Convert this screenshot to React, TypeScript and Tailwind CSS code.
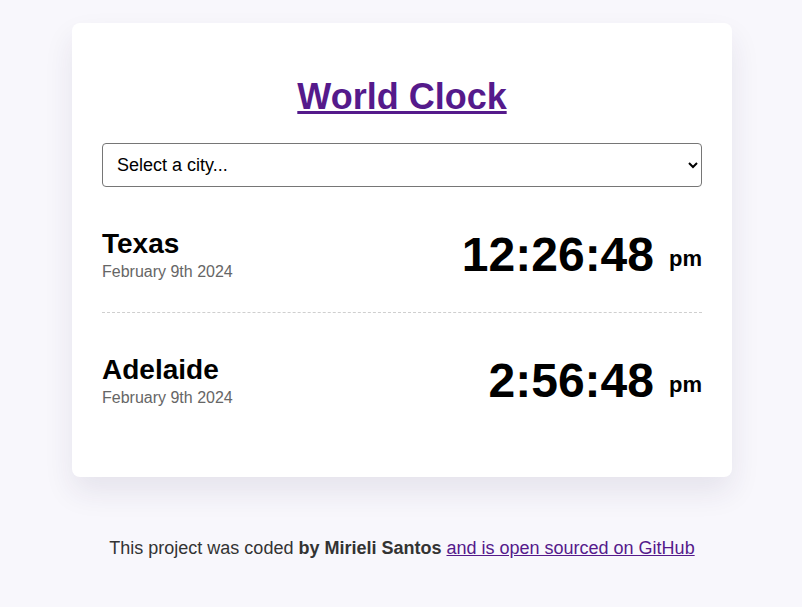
import React, { useState } from 'react';

type City = {
  name: string;
  date: string;
  time: string;
  period: string;
};

const cities: City[] = [
  { name: 'Texas', date: 'February 9th 2024', time: '12:26:48', period: 'pm' },
  { name: 'Adelaide', date: 'February 9th 2024', time: '2:56:48', period: 'pm' },
];

const CityRow: React.FC<{ city: City; last?: boolean }> = ({ city, last }) => (
  <div
    className={`flex items-center justify-between pt-[40px] pb-[30px] ${
      last ? '' : 'border-b border-dashed border-[#cfcfcf]'
    }`}
  >
    <div>
      <h2 className="text-[28px] font-bold leading-[30px] text-black">{city.name}</h2>
      <div className="mt-[4px] text-[16px] leading-[18px] text-[#666]">{city.date}</div>
    </div>
    <div className="flex items-center">
      <span className="text-[48px] font-bold leading-[55px] text-black">{city.time}</span>
      <span className="mt-[8px] ml-[15px] text-[22px] font-bold leading-[25px] text-black">{city.period}</span>
    </div>
  </div>
);

export default function App() {
  const [city, setCity] = useState('');

  return (
    <div className="min-h-[607px] bg-[#f8f7fc] pt-[23px] pl-[2px] font-['Liberation_Sans',Arial,sans-serif]">
      <div className="mx-auto w-[660px] rounded-[8px] bg-white px-[30px] pt-[53px] pb-[39px] shadow-[0_15px_30px_rgba(40,30,80,0.09)]">
        <h1 className="text-center text-[36px] font-bold leading-[41px]">
          <a href="#" className="text-[#551a8b] underline">
            World Clock
          </a>
        </h1>

        <select
          value={city}
          onChange={(e) => setCity(e.target.value)}
          className="mt-[26px] block h-[44px] w-full rounded-[4px] border border-[#767676] bg-white px-[10px] text-[18px] text-black"
        >
          <option value="">Select a city...</option>
          <option value="current">My current location</option>
          <option value="Europe/Paris">Paris</option>
          <option value="Asia/Tokyo">Tokyo</option>
        </select>

        {cities.map((c, i) => (
          <CityRow key={c.name} city={c} last={i === cities.length - 1} />
        ))}
      </div>

      <footer className="mt-[61px] text-center text-[18px] leading-[21px] text-[#333]">
        This project was coded <strong>by Mirieli Santos</strong>{' '}
        <a href="#" className="text-[#551a8b] underline">
          and is open sourced on GitHub
        </a>
      </footer>
    </div>
  );
}
